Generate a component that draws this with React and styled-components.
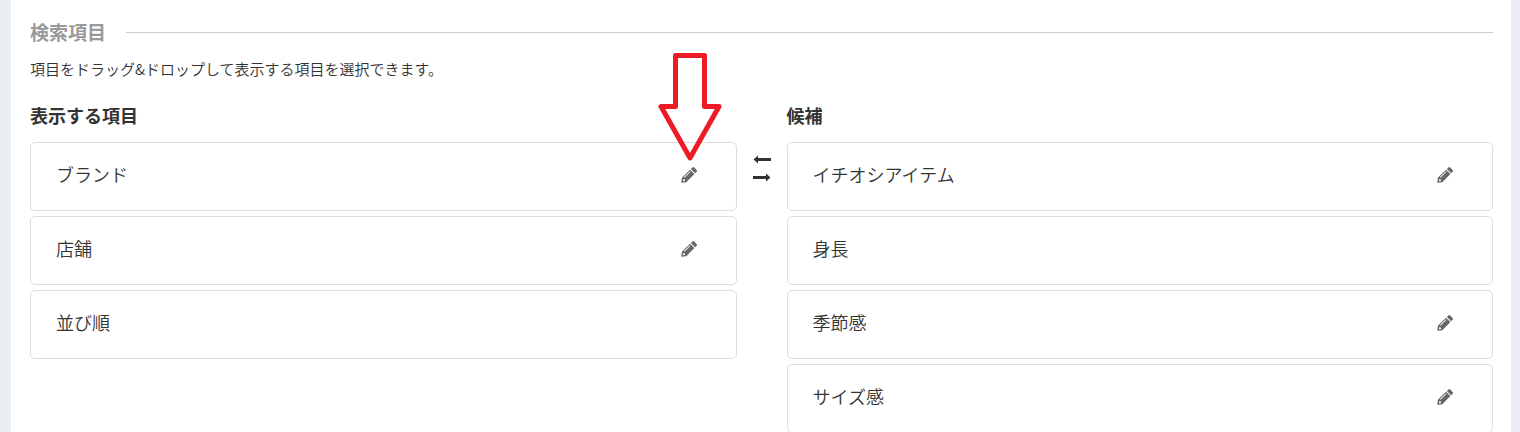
import styled, { createGlobalStyle } from "styled-components";

const displayed = [
  { name: "ブランド", editable: true, marked: true },
  { name: "店舗", editable: true },
  { name: "並び順" },
];

const candidates = [
  { name: "イチオシアイテム", editable: true },
  { name: "身長" },
  { name: "季節感", editable: true },
  { name: "サイズ感", editable: true },
];

function FieldList({ id, title, fields }) {
  return (
    <Column aria-labelledby={id}>
      <ColumnTitle id={id}>{title}</ColumnTitle>
      <List>
        {fields.map((field) => (
          <Item key={field.name} draggable>
            {field.name}
            {field.editable && (
              <EditButton type="button" aria-label={`${field.name}を編集`}>
                <Pencil />
                {field.marked && <Pointer />}
              </EditButton>
            )}
          </Item>
        ))}
      </List>
    </Column>
  );
}

function Pencil() {
  return (
    <svg width="16" height="16" viewBox="0 0 16 16" fill="currentColor">
      <path d="M9.9 2 11.4.5q.9-.9 1.800 0l2.400 2.400q.9.9 0 1.800L14.100 6.200z" />
      <path
        fillRule="evenodd"
        d="M9 2.700 13.400 7.100 5.300 15.200.3 15.800.9 10.800zM8.900 4.200 3 10.100l.6.6L9.500 4.800zM2.200 12l-.3 2.200 2.100-.3v-1.300H2.800z"
      />
    </svg>
  );
}

function Pointer() {
  return (
    <PointerSvg width="64" height="110" viewBox="0 0 64 110" aria-hidden="true">
      <path d="M17.5 3.5h29v51H61L32 106 3 54.5h14.5z" />
    </PointerSvg>
  );
}

function App() {
  return (
    <>
      <GlobalStyle />
      <Page>
        <Panel>
          <Heading>検索項目</Heading>
          <Desc>項目をドラッグ&amp;ドロップして表示する項目を選択できます。</Desc>
          <Columns>
            <FieldList id="displayed" title="表示する項目" fields={displayed} />
            <Exchange aria-hidden="true">
              <svg width="18" height="9" viewBox="0 0 18 9">
                <path d="M.5 4.500 5 .5v2.500h13v3H5v2.500z" />
              </svg>
              <svg width="18" height="9" viewBox="0 0 18 9">
                <path d="M17.500 4.500 13 .5v2.500H0v3h13v2.500z" />
              </svg>
            </Exchange>
            <FieldList id="candidates" title="候補" fields={candidates} />
          </Columns>
        </Panel>
      </Page>
    </>
  );
}

const GlobalStyle = createGlobalStyle`
  * {
    box-sizing: border-box;
  }

  body {
    margin: 0;
    background-color: #ebeff4;
    color: #333;
    font-family: "Noto Sans CJK JP", sans-serif;
    font-weight: 350;
  }
`;

const Page = styled.div`
  height: 100vh;
  padding: 0 9px 0 11px;
  overflow: hidden;
`;

const Panel = styled.main`
  min-height: 100%;
  padding: 17px 18px 0 19px;
  background-color: white;
`;

const Heading = styled.h2`
  display: flex;
  align-items: center;
  gap: 20px;
  margin: 0;
  color: #999;
  font-size: 19px;
  font-weight: 700;
  line-height: 30px;

  &::after {
    content: "";
    flex: 1;
    height: 1px;
    background-color: #ccc;
  }
`;

const Desc = styled.p`
  margin: 11px 0 22px;
  font-size: 15px;
  line-height: 22px;
`;

const Columns = styled.div`
  display: grid;
  grid-template-columns: 1fr 50px 1fr;
`;

const Column = styled.section`
  min-width: 0;
`;

const ColumnTitle = styled.h3`
  margin: 0 0 14px;
  font-size: 18px;
  font-weight: 700;
  line-height: 26px;
`;

const List = styled.ul`
  display: flex;
  flex-direction: column;
  gap: 5px;
  margin: 0;
  padding: 0;
  list-style: none;
`;

const Item = styled.li`
  display: flex;
  align-items: center;
  justify-content: space-between;
  padding: 18px 39px 23px 25px;
  border: 1px solid #ddd;
  border-radius: 5px;
  background-color: white;
  font-size: 18px;
  line-height: 26px;
  cursor: move;
`;

const EditButton = styled.button`
  position: relative;
  display: flex;
  padding: 2px 0 0;
  border: none;
  background: none;
  color: #666;
  cursor: pointer;
`;

const PointerSvg = styled.svg`
  position: absolute;
  bottom: 100%;
  left: 50%;
  margin: 0 0 3px -31px;
  fill: none;
  stroke: #ed1c24;
  stroke-width: 5;
  stroke-linejoin: round;
  pointer-events: none;
`;

const Exchange = styled.div`
  display: flex;
  flex-direction: column;
  align-items: center;
  gap: 9px;
  padding-top: 53px;
  fill: #333;
`;

export default App;
